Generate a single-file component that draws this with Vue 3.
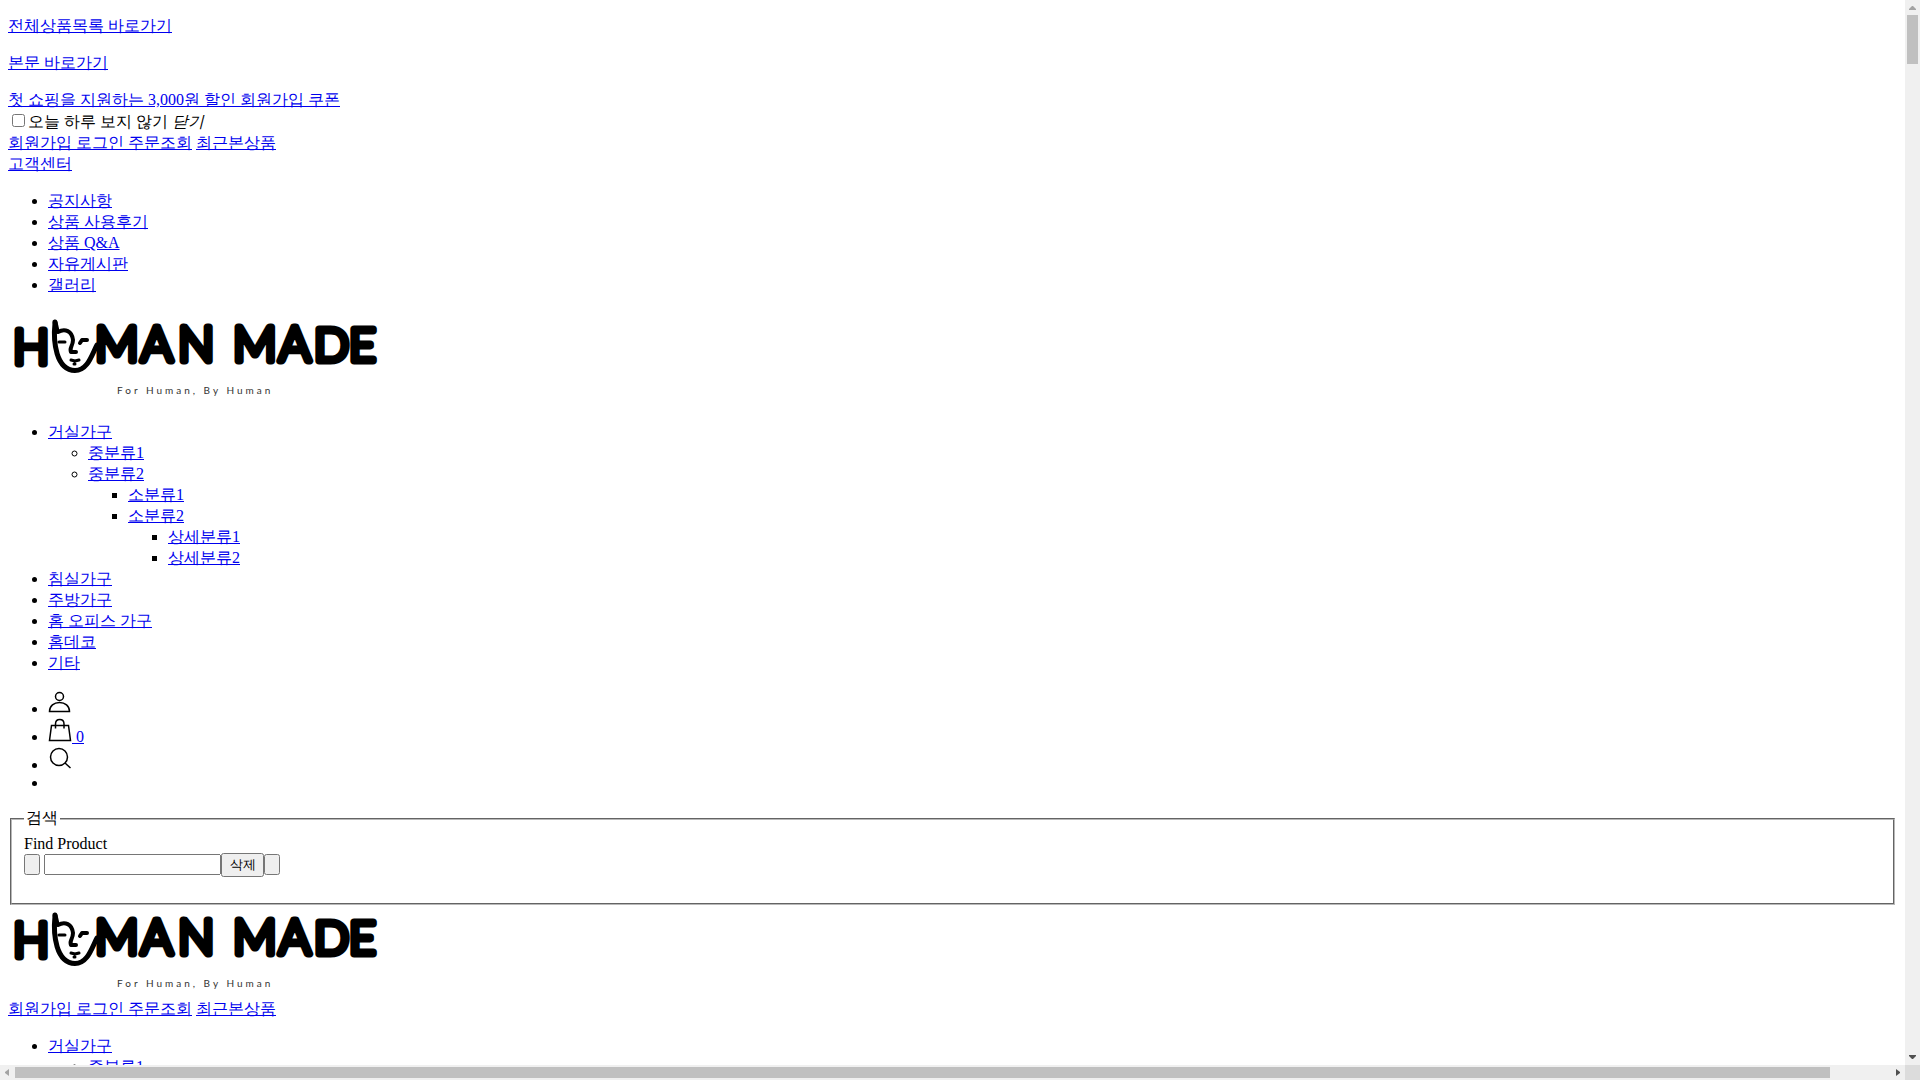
<script setup>
import { defineComponent, h } from 'vue'

const notices = ['공지사항', '상품 사용후기', '상품 Q&A', '자유게시판', '갤러리']

const categories = [
  {
    name: '거실가구',
    children: [
      { name: '중분류1' },
      {
        name: '중분류2',
        children: [
          { name: '소분류1' },
          { name: '소분류2', children: [{ name: '상세분류1' }, { name: '상세분류2' }] },
        ],
      },
    ],
  },
  { name: '침실가구' },
  { name: '주방가구' },
  { name: '홈 오피스 가구' },
  { name: '홈데코' },
  { name: '기타' },
]

const CategoryList = defineComponent({
  props: { items: Array },
  setup(props) {
    const list = (items) =>
      h('ul', items.map((item) =>
        h('li', [h('a', { href: '#' }, item.name), item.children ? list(item.children) : null])))
    return () => list(props.items)
  },
})

const SiteLogo = defineComponent({
  setup() {
    const face = [
      ['M47 11C45 30 48 58 67 58.500C80 58.500 84 42 89 33', 5],
      ['M47 10L49 19', 5],
      ['M50 20C57 16 64 19 65 28C65 34 61 36 63 40H68', 4],
      ['M51 30H57', 3],
      ['M72 31L74 28H79', 4],
      ['M63 48L67 49L71 48M66 52H67', 3],
    ]
    return () =>
      h('a', { href: '#', class: 'logo', 'aria-label': 'Human Made' }, [
        h('svg', { width: 372, height: 90, viewBox: '0 0 372 90' }, [
          h('g', { class: 'logo-word' }, [
            h('text', { x: '5', y: '52' }, 'H'),
            h('text', { x: '87 133 170', y: '49' }, 'MAN'),
            h('text', { x: '225 271', y: '49' }, 'MA'),
            h('text', { class: 'narrow', x: '306 341', y: '49' }, 'DE'),
          ]),
          h('g', { class: 'logo-face' }, face.map(([d, w]) => h('path', { d, 'stroke-width': w }))),
          h('text', { class: 'logo-tag', x: 109, y: 82 }, 'For Human, By Human'),
        ]),
      ])
  },
})
</script>

<template>
  <div class="window">
    <main class="page" lang="ko">
      <p><a href="#category">전체상품목록 바로가기</a></p>
      <p><a href="#contents">본문 바로가기</a></p>
      <div><a href="#">첫 쇼핑을 지원하는 3,000원 할인 회원가입 쿠폰</a></div>
      <div><input id="today" type="checkbox"><label for="today">오늘 하루 보지 않기</label> <i>닫기</i></div>
      <div><a href="#">회원가입 </a><a href="#">로그인 </a><a href="#">주문조회</a> <a href="#">최근본상품</a></div>
      <div><a href="#">고객센터</a></div>
      <ul>
        <li v-for="n in notices" :key="n"><a href="#">{{ n }}</a></li>
      </ul>
      <div><SiteLogo /></div>
      <CategoryList id="category" :items="categories" />
      <ul>
        <li>
          <a href="#" aria-label="마이페이지"><svg class="icon" width="24" height="24" viewBox="0 0 24 24"><circle cx="11.500" cy="6.500" r="4" /><path d="M1.500 21.500C1.500 16 6 12.500 11.500 12.500S21.500 16 21.500 21.500Z" /></svg></a>
        </li>
        <li>
          <a href="#"><svg class="icon" width="24" height="24" viewBox="0 0 24 24"><path d="M3.500 7.500H20.500L22.500 22.500H1.500ZM7.500 10.500V6C7.500 0 16 0 16 6V10.500" /></svg> 0</a>
        </li>
        <li>
          <a href="#" aria-label="검색"><svg class="icon" width="24" height="24" viewBox="0 0 24 24"><circle cx="11" cy="11" r="8.500" /><path d="M17 17L22.500 22" /></svg></a>
        </li>
        <li></li>
      </ul>
      <form @submit.prevent>
        <fieldset>
          <legend>검색</legend>
          <label for="keyword">Find Product</label>
          <div class="search">
            <button class="blank back" type="button" aria-label="이전"></button>
            <input id="keyword" type="text">
            <button class="clear" type="button">삭제</button>
            <button class="blank" type="submit" aria-label="찾기"></button>
          </div>
        </fieldset>
      </form>
      <div><SiteLogo /></div>
      <div><a href="#">회원가입 </a><a href="#">로그인 </a><a href="#">주문조회</a> <a href="#">최근본상품</a></div>
      <CategoryList :items="categories" />
    </main>
    <div class="bar vertical" aria-hidden="true">
      <svg width="15" height="15"><path fill="#a3a3a3" d="M4 10V9L7 6H8L11 9V10Z" /></svg>
      <div class="track"><div class="thumb"></div></div>
      <svg width="15" height="15"><path fill="#505050" d="M4 5V6L7 9H8L11 6V5Z" /></svg>
    </div>
    <div class="bar horizontal" aria-hidden="true">
      <svg width="15" height="15"><path fill="#a3a3a3" d="M9 4V11L5 8V7Z" /></svg>
      <div class="track"><div class="thumb"></div></div>
      <svg width="15" height="15"><path fill="#505050" d="M6 4V11L10 8V7Z" /></svg>
    </div>
    <div class="corner"></div>
  </div>
</template>

<style>
body { margin: 0; }
</style>

<style scoped>
.window {
  display: grid;
  grid-template: minmax(0, 1fr) 15px / minmax(0, 1fr) 15px;
  height: 100vh;
  background: #fff;
}
.page {
  overflow: hidden;
  padding: 0 8px;
  font: 16px "Liberation Serif", serif;
  color: #000;
}
.page :deep(a) { color: #00e; text-decoration: underline; }
.page :deep(.logo-word) {
  font: 300 48px Lato, sans-serif;
  fill: #000;
  stroke: #000;
  stroke-width: 7px;
  stroke-linejoin: round;
}
.page :deep(.narrow) { font-size: 46px; }
.page :deep(.logo-face) { fill: none; stroke: #000; stroke-linecap: round; stroke-linejoin: round; }
.page :deep(.logo-tag) { font: 10px Lato, sans-serif; letter-spacing: 3px; fill: #333; }
.icon { fill: none; stroke: #000; stroke-width: 1.500px; }
fieldset { padding-bottom: 26px; border: 2px groove #b8b8b8; }
.search { display: flex; align-items: center; }
#keyword { box-sizing: border-box; width: 177px; }
.blank { width: 16px; height: 21px; }
.back { margin-right: 4px; }
.clear { width: 43px; padding: 1px 5px; }
.bar { display: flex; background: #f0f0f0; }
.bar svg { display: block; flex: none; }
.track { flex: 1; display: flex; }
.thumb { background: #c0c0c0; }
.vertical { flex-direction: column; }
.vertical .track { padding: 0 2px; }
.vertical .thumb { width: 100%; height: 49px; }
.horizontal .track { padding: 2px 0; }
.horizontal .thumb { width: 96.8%; }
.corner { background: #dcdcdc; }
</style>
